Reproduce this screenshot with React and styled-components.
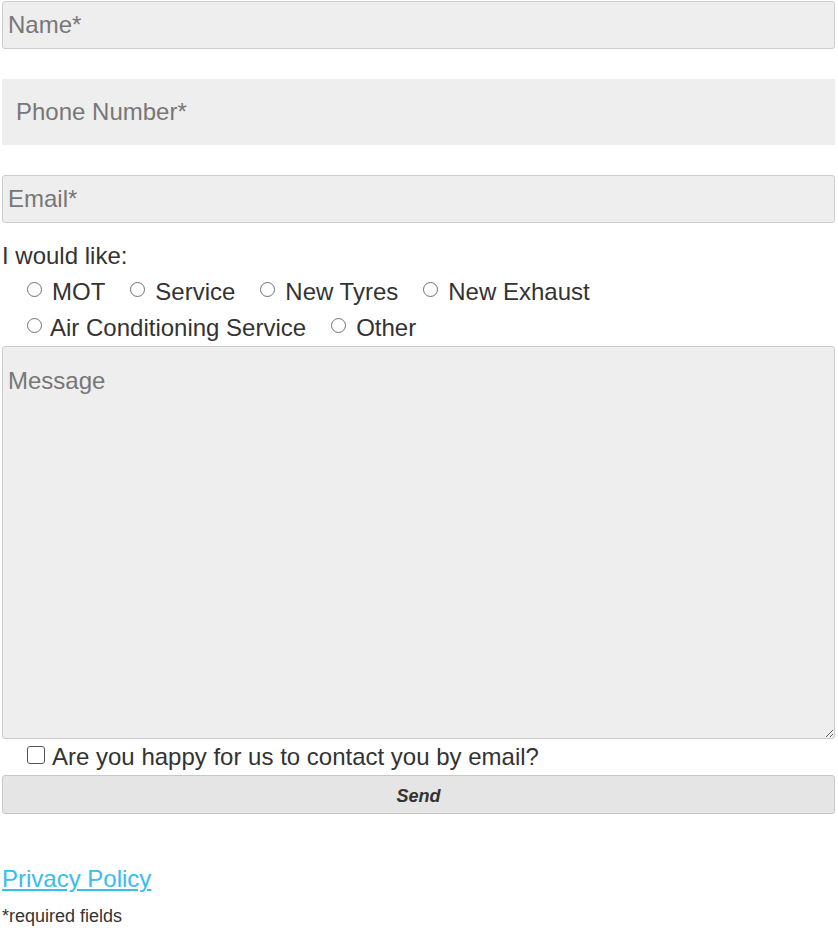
import React from "react";
import styled, { createGlobalStyle } from "styled-components";

const Global = createGlobalStyle`
  html, body { margin: 0; padding: 0; background: #fff; }
  body { font-family: "Liberation Sans", Arial, sans-serif; color: #333; }
  * { box-sizing: border-box; }
`;

const Form = styled.form`
  display: flex;
  flex-direction: column;
  margin: 1px 3px 0 2px;
  font-size: 24px;
`;

const TextInput = styled.input`
  display: block;
  width: 100%;
  height: ${(p) => (p.$flat ? "66px" : "48px")};
  margin-bottom: ${(p) => p.$mb || 0}px;
  padding: 0 ${(p) => (p.$flat ? "14px" : "5px")};
  border: ${(p) => (p.$flat ? "none" : "1px solid #ccc")};
  border-radius: ${(p) => (p.$flat ? "0" : "3px")};
  background: #eee;
  font-family: inherit;
  font-size: 24px;
  color: #333;
  outline: none;
  &::placeholder { color: #777; opacity: 1; }
`;

const Label = styled.div`
  margin-top: 15px;
  line-height: 36px;
`;

const Options = styled.div`
  display: flex;
  flex-wrap: wrap;
  column-gap: 25px;
  padding-left: 25px;
  line-height: 36px;
`;

const Option = styled.label`
  display: inline-flex;
  align-items: center;
  gap: ${(p) => p.$gap || 10}px;
`;

const Radio = styled.input.attrs({ type: "radio" })`
  appearance: none;
  margin: 0 0 5px 0;
  width: 15px;
  height: 15px;
  border: 1px solid #707070;
  border-radius: 50%;
  background: #fff;
`;

const TextArea = styled.textarea`
  display: block;
  width: 100%;
  height: 393px;
  margin-top: 0;
  padding: 20px 5px;
  border: 1px solid #ccc;
  border-radius: 3px;
  background: #eee;
  font-family: inherit;
  font-size: 24px;
  color: #333;
  outline: none;
  resize: vertical;
  &::placeholder { color: #777; opacity: 1; }
`;

const CheckRow = styled.label`
  display: flex;
  align-items: center;
  gap: 7px;
  padding-left: 25px;
  line-height: 36px;
`;

const Check = styled.input.attrs({ type: "checkbox" })`
  appearance: none;
  margin: 0 0 4px 0;
  width: 18px;
  height: 18px;
  border: 1px solid #555;
  border-radius: 3px;
  background: #fff;
`;

const SendButton = styled.button`
  display: block;
  width: 100%;
  height: 39px;
  padding: 3px 0 0 0;
  border: 1px solid #c8c8c8;
  border-radius: 3px;
  background: #e5e5e5;
  font-family: inherit;
  font-size: 18px;
  font-weight: bold;
  font-style: italic;
  color: #333;
`;

const PolicyLink = styled.a`
  display: block;
  margin-top: 47px;
  line-height: 36px;
  font-size: 24px;
  color: #38bdf0;
  text-decoration: underline;
  text-underline-offset: 2px;
  text-decoration-thickness: 2px;
  align-self: flex-start;
`;

const Note = styled.p`
  margin: 9px 0 0 0;
  font-size: 18px;
  color: #333;
`;

const services = ["MOT", "Service", "New Tyres", "New Exhaust", "Air Conditioning Service", "Other"];

export default function App() {
  return (
    <>
      <Global />
      <Form onSubmit={(e) => e.preventDefault()}>
        <TextInput placeholder="Name*" $mb={30} />
        <TextInput placeholder="Phone Number*" $flat $mb={30} />
        <TextInput placeholder="Email*" />
        <Label>I would like:</Label>
        <Options>
          {services.map((s) => (
            <Option key={s} $gap={s === "Air Conditioning Service" ? 8 : 10}>
              <Radio name="service" value={s} />
              {s}
            </Option>
          ))}
        </Options>
        <TextArea placeholder="Message" />
        <CheckRow>
          <Check />
          Are you happy for us to contact you by email?
        </CheckRow>
        <SendButton type="submit">Send</SendButton>
        <PolicyLink href="#">Privacy Policy</PolicyLink>
        <Note>*required fields</Note>
      </Form>
    </>
  );
}
